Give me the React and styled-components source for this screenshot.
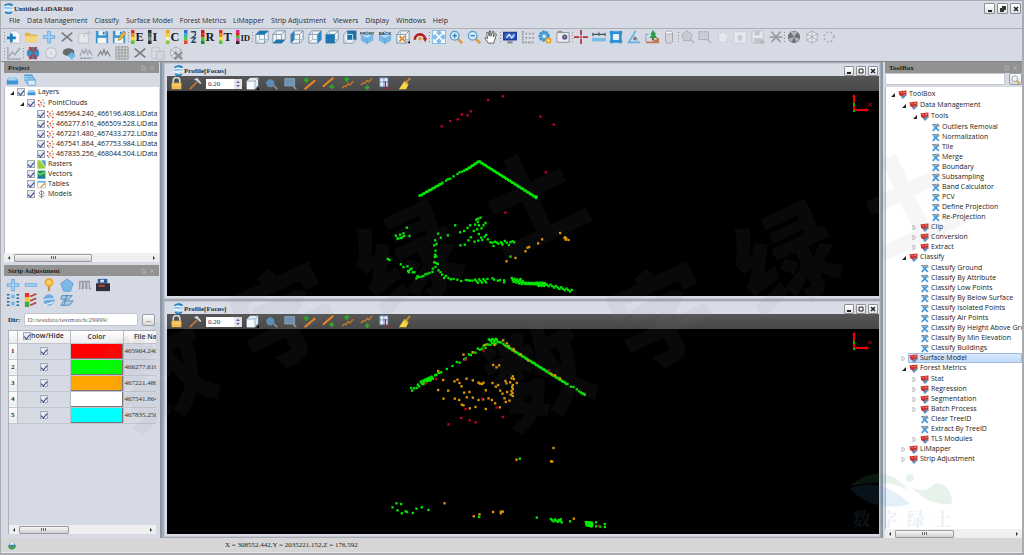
import { useState } from "react";
import styled, { createGlobalStyle } from "styled-components";

const GlobalStyle=createGlobalStyle`
    *{
        box-sizing:border-box;
    }
    body{
        margin:0;
        background:#d6dae5;
        color:#2b2d33;
        font-family:"Open Sans","Noto Sans",sans-serif;
        font-size:7px;
        line-height:10px;
    }
    button,input{
        font:inherit;
        color:inherit;
        margin:0;
        padding:0;
    }
    ul{
        list-style:none;
        margin:0;
        padding:0;
    }
`;

const mono=`font-family:"Liberation Serif","DejaVu Serif",serif;`;

const Window=styled.div`
    position:relative;
    min-height:100vh;
    display:flex;
    flex-direction:column;
    overflow:hidden;
    border:solid #a9abb1;
    border-width:1px 2px 2px 1px;
`;

const TitleBar=styled.header`
    display:flex;
    align-items:center;
    justify-content:space-between;
    height:14px;
    padding:1px 1px 0 2px;
`;

const AppTitle=styled.h1`
    ${mono}
    display:flex;
    align-items:center;
    margin:0;
    font-size:7px;
    font-weight:bold;
`;

const WindowButtons=styled.div`
    display:flex;
    gap:2px;
`;

const WindowButton=styled.button`
    display:flex;
    align-items:center;
    justify-content:center;
    width:${p=>p.$small?"10px":"11px"};
    height:${p=>p.$small?"10px":"11px"};
    border:1px solid #8d8f94;
    border-radius:1px;
    background:linear-gradient(#fff,#dfe0e3);
`;

const MenuBar=styled.nav`
    display:flex;
    gap:7px;
    height:14px;
    padding:1px 8px 0;
    border-bottom:1px solid #adb0b8;
`;

const MenuLink=styled.a`
    color:#2b2d33;
    font-weight:500;
    text-decoration:none;
    white-space:nowrap;
`;

const ToolRow=styled.div`
    display:flex;
    align-items:center;
    width:${p=>p.$short?"18%":"82%"};
    height:16px;
    padding-left:3px;
`;

const Grip=styled.span`
    flex:none;
    width:1px;
    height:10px;
    background:repeating-linear-gradient(#8c9099 0 1px,transparent 1px 3px);
`;

const ToolButton=styled.button`
    display:flex;
    align-items:center;
    justify-content:center;
    flex:${p=>p.$width?"none":"1 1 0"};
    width:${p=>p.$width?p.$width+"px":"auto"};
    min-width:0;
    height:14px;
    border:0;
    background:none;
    opacity:${p=>p.$dim?0.4:1};
`;

const Body=styled.main`
    display:flex;
    flex:1;
    min-height:0;
    border-top:1px solid #85878d;
`;

const Dock=styled.aside`
    display:flex;
    flex-direction:column;
    flex:none;
    gap:3px;
    width:${p=>p.$wide?"161px":"141px"};
    padding:${p=>p.$wide?"0 1px 0 3px":"0 0 0 2px"};
    border:solid #8797aa;
    border-width:${p=>p.$wide?"0 2px 0 0":"0 0 0 2px"};
`;

const Panel=styled.section`
    display:flex;
    flex-direction:column;
    flex:${p=>p.$grow||1} 1 0;
    min-height:0;
    overflow:hidden;
`;

const PanelHeader=styled.h2`
    ${mono}
    display:flex;
    align-items:center;
    justify-content:space-between;
    flex:none;
    height:11px;
    margin:0;
    padding:0 4px;
    background:#929292;
    color:#1f1f1f;
    font-size:7px;
    font-weight:bold;
`;

const PanelTools=styled.div`
    display:flex;
    flex:none;
`;

const StripTools=styled.div`
    display:flex;
    flex-direction:column;
    gap:1px;
    padding:2px 0 1px;
`;

const TreeBox=styled.div`
    flex:1;
    min-height:0;
    overflow:hidden;
    padding:${p=>p.$top}px 0 0 2px;
    border-left:1px solid #b4b7bd;
    background:#fff;
`;

const Branch=styled.ul`
    padding:1px 0 0 ${p=>p.$tight?"10px":"11px"};
`;

const TreeRow=styled.div`
    display:flex;
    align-items:center;
    height:10px;
`;

const Toggle=styled.button`
    display:flex;
    align-items:center;
    justify-content:center;
    flex:none;
    width:9px;
    height:10px;
    border:0;
    background:none;
`;

const TreeLabel=styled.label`
    display:flex;
    align-items:center;
    flex:1;
    gap:${p=>p.$tight?"1px":"2px"};
    height:10px;
    padding-left:1px;
    white-space:nowrap;
    border-radius:1px;
    color:#222;
    background:${p=>p.$selected?"linear-gradient(#dcebfd,#bdd8f8)":"none"};
    box-shadow:${p=>p.$selected?"inset 0 0 0 1px #9dbce0":"none"};
`;

const Check=styled.input`
    appearance:none;
    flex:none;
    display:inline-flex;
    align-items:center;
    justify-content:center;
    width:8px;
    height:8px;
    border:1px solid #a3a7af;
    background:#e6e9f1;
    &:checked::after{
        content:"";
        width:3px;
        height:5px;
        border:solid #2d3f8c;
        border-width:0 1px 1px 0;
        transform:rotate(40deg);
    }
`;

const ScrollTrack=styled.div`
    display:flex;
    align-items:center;
    flex:none;
    height:9px;
    background:#efefef;
`;

const ScrollArrow=styled.button`
    display:flex;
    align-items:center;
    justify-content:center;
    width:10px;
    height:9px;
    border:0;
    background:none;
`;

const ScrollLane=styled.div`
    flex:1;
`;

const ScrollThumb=styled.div`
    display:flex;
    align-items:center;
    justify-content:center;
    width:${p=>p.$size}%;
    height:8px;
    border:1px solid #9b9b9b;
    border-radius:1px;
    background:linear-gradient(#f8f8f8,#cfcfd1);
`;

const SearchRow=styled.form`
    display:flex;
    gap:4px;
    height:14px;
    padding:0 0 2px;
`;

const SearchInput=styled.input`
    flex:1;
    min-width:0;
    border:1px solid #c3c6ce;
    border-radius:1px;
    background:#fff;
`;

const SmallButton=styled.button`
    display:flex;
    align-items:center;
    justify-content:center;
    width:13px;
    height:12px;
    border:1px solid #9a9ca2;
    border-radius:2px;
    background:linear-gradient(#fff,#d8d8d8);
`;

const DirRow=styled.div`
    ${mono}
    display:flex;
    align-items:center;
    gap:4px;
    margin:5px 4px 4px;
    label{
        font-weight:bold;
        white-space:nowrap;
    }
`;

const DirInput=styled.input`
    flex:1;
    min-width:0;
    height:13px;
    padding:0 2px;
    border:1px solid #c3c6ce;
    border-radius:2px;
    background:#fff;
    color:#666;
`;

const TableWrap=styled.div`
    display:flex;
    flex-direction:column;
    flex:1;
    margin:0 3px 4px 4px;
    overflow:hidden;
    border-left:1px solid #aeb1b8;
    border-top:1px solid #aeb1b8;
`;

const TableScroll=styled.div`
    flex:1;
    overflow:hidden;
`;

const StripTable=styled.table`
    table-layout:fixed;
    width:170px;
    border-collapse:collapse;
    th,td{
        padding:0;
        border-right:1px solid #b9bcc5;
        border-bottom:1px solid #c2c5ce;
        text-align:center;
        white-space:nowrap;
        overflow:hidden;
    }
    th{
        height:12px;
        background:linear-gradient(#fff,#ececec);
        font-weight:600;
    }
    td{
        ${mono}
        height:16px;
    }
    tbody th{
        ${mono}
        height:16px;
        font-weight:bold;
    }
    td:last-child{
        padding-left:1px;
        text-align:left;
    }
`;

const HeadCheck=styled.label`
    display:inline-flex;
    align-items:center;
`;

const CheckHold=styled.span`
    display:flex;
    justify-content:center;
`;

const Swatch=styled.button`
    display:block;
    width:100%;
    height:15px;
    border:1px solid #7c7474;
    border-width:0 1px 1px 0;
    background:${p=>p.$color};
`;

const Mdi=styled.div`
    display:flex;
    flex-direction:column;
    flex:1;
    gap:2px;
    min-width:0;
    padding:1px 1px 1px 2px;
    background:#a4a8b0;
`;

const ViewWindow=styled.section`
    display:flex;
    flex-direction:column;
    flex:1 1 0;
    min-height:0;
    padding:1px 0 2px 2px;
    border:1px solid #c4c8d2;
    background:#d8dce7;
`;

const ViewHeader=styled.div`
    display:flex;
    align-items:center;
    justify-content:space-between;
    height:11px;
    padding:0 1px 0 6px;
`;

const ViewTools=styled.div`
    display:flex;
    align-items:center;
    flex:none;
    height:15px;
    background:linear-gradient(#565656,#484848);
`;

const Spin=styled.span`
    display:flex;
    align-items:center;
    width:36px;
    height:10px;
    margin:0 1px;
    background:#fff;
    input{
        ${mono}
        flex:1;
        min-width:0;
        padding-left:2px;
        border:0;
        background:none;
    }
`;

const Canvas=styled.div`
    position:relative;
    flex:1;
    min-height:0;
    overflow:hidden;
    background:#000;
    svg{
        display:block;
    }
`;

const Axis=styled.div`
    position:absolute;
    top:2px;
    right:3px;
`;

const Cloud=styled.svg`
    position:absolute;
    inset:0;
    width:100%;
    height:100%;
`;

const StatusBar=styled.footer`
    ${mono}
    display:flex;
    align-items:center;
    height:15px;
    padding-left:6px;
    background:#d6d6d6;
    border-bottom:1px solid #e6e8ee;
`;

const Coordinates=styled.output`
    margin-left:208px;
    color:#222;
`;

const Watermark=styled.div`
    position:absolute;
    left:${p=>p.$left}%;
    top:61%;
    display:flex;
    gap:34px;
    transform:rotate(-25deg);
    transform-origin:left center;
    pointer-events:none;
    color:rgba(128,128,128,0.07);
    font:900 102px/104px "Noto Sans CJK SC",sans-serif;
`;

const Brand=styled.div`
    position:absolute;
    right:68px;
    bottom:25px;
    display:flex;
    flex-direction:column;
    align-items:center;
    pointer-events:none;
    opacity:0.13;
    color:#5b8dbb;
    font:bold 18px/20px "Noto Serif CJK SC","Noto Sans CJK SC",serif;
`;

const BrandText=styled.div`
    display:flex;
    gap:9px;
`;

const page=<path d="M4 1h7l4 4v10H4z" fill="#f7f8fa" stroke="#b4b8c0" />;
const disk=<><path d="M1 1h13l1 2v12H1z" fill="#3f96cf" /><path d="M4 1h8v5H4z" fill="#e9f2f8" /><path d="M3 9h10v6H3z" fill="#f5f5f5" /><path d="M9 2h2v3H9z" fill="#2774a8" /></>;
const box=<><path d="M1 5l4-4h10v10l-4 4H1z" fill="#f3f7fa" stroke="#6e8ca3" strokeWidth="1" /><path d="M1 5h10v10M11 5l4-4" fill="none" stroke="#6e8ca3" /><path d="M5 1v10h10M5 11l-4 4" fill="none" stroke="#9db1c0" /></>;
const roundBox=(text)=><><path d="M1 5l7-4 7 4v7l-7 4-7-4z" fill="#74b7e6" /><path d="M1 5l7-3 7 3-7 4z" fill="#b7dcf5" /><path d="M8 9v7" stroke="#5b9fd0" /><text x="8" y="6" textAnchor="middle" fill="#26415a" fontFamily="Liberation Sans" fontWeight="bold" fontSize="5">{text}</text></>;
const glass=<><path d="M10 10l5 5" stroke="#dd9c45" strokeWidth="3" /><circle cx="6.5" cy="6.5" r="5" fill="#cfe9fa" stroke="#5a9ccc" strokeWidth="1.5" /></>;
const ramp=(colors)=>colors.map((c,i)=><rect key={i} x="0" y={i*16/colors.length} width="4" height={16/colors.length+0.1} fill={c} />);
const rainbow=["#e12a1b","#f08a1c","#f4e32a","#54c232"];
const letter=(text)=><text x="5" y="13" fill="#1c1c1c" fontFamily="Liberation Serif" fontWeight="bold" fontSize={text.length>1?"10":"14"}>{text}</text>;
const hexes=<><path d="M8 1l6 3.500v7L8 15l-6-3.500v-7z" fill="#fff" stroke="#666" /><path d="M2 4.500l12 7M14 4.500l-12 7M8 1v14" stroke="#666" /></>;
const dots=<>{[["#e04a3a",3,3],["#e04a3a",7,6],["#f2a13a",11,2],["#6db4e8",13,7],["#e04a3a",3,10],["#f2a13a",8,10],["#6db4e8",5,13],["#e04a3a",12,13]].map(([c,x,y])=><circle key={x+"-"+y} cx={x} cy={y} r="1.600" fill={c} />)}</>;
const wave=<path d="M1 14l3-3 2 1 3-4 2 2 4-5" fill="none" stroke="#cc7a22" strokeWidth="1.600" />;
const waveHigh=<path d="M1 10l3-3 2 1 3-4 2 2 4-5" fill="none" stroke="#cc7a22" strokeWidth="1.600" />;
const plus=(x,y)=><path d={`M${x} ${y-3}v6M${x-3} ${y}h6`} stroke="#2fa82a" strokeWidth="2.200" />;
const magnet=<path d="M11 11l4 4" stroke="#8d959c" strokeWidth="2" />;

const icons={
    logo:<><circle cx="8" cy="8" r="7" fill="#7fbfe6" /><path d="M1 6c5-4 9 2 14-1M0 9h16M2 12c4-3 8 1 12-1" stroke="#fff" strokeWidth="1.500" fill="none" /><path d="M2 4c4-4 10-3 12 0M3 13c3 3 7 3 10 0" fill="none" stroke="#1e78b4" strokeWidth="2" /></>,
    add:<>{page}<path d="M5 4v10M0 9h10" stroke="#167dbb" strokeWidth="3" /></>,
    folder:<><path d="M1 3h5l2 2h7v9H1z" fill="#e4b64e" /><path d="M1 7h14v7H1z" fill="#f4d580" /></>,
    plus:<><path d="M8 1v14M1 8h14" stroke="#6aa8de" strokeWidth="4" /><path d="M8 2v12M2 8h12" stroke="#a5d2f4" strokeWidth="2" /></>,
    minus:<><path d="M1 8h14" stroke="#6aa8de" strokeWidth="4" /><path d="M2 8h12" stroke="#a5d2f4" strokeWidth="2" /></>,
    cross:<path d="M2 3l12 10M14 3L2 13" stroke="#7b7d80" strokeWidth="2" />,
    export:<><path d="M2 4h11v11H2z" fill="#e6e7ea" stroke="#bcbec2" /><path d="M8 8c0-4 3-5 6-5M12 1l3 2-3 3" fill="none" stroke="#c2c4c8" strokeWidth="1.500" /></>,
    save:disk,
    saveAs:<>{disk}<path d="M7 12l1-3 6-7 2 2-6 7z" fill="#f3b735" stroke="#99661a" strokeWidth="0.600" /></>,
    colorE:<>{ramp(rainbow)}{letter("E")}</>,
    colorI:<>{ramp(["#2b2b2b","#4f6658","#75917d","#333"])}{letter("I")}</>,
    colorC:<>{ramp(["#ef9c23","#f4d23a","#f4efd0","#86c440"])}{letter("C")}</>,
    colorH:<>{ramp(["#2d6fd0","#35b8c6","#5dc848","#e74830"])}<path d="M8 2h5v4l-4 3h4l-4 5h5" fill="none" stroke="#2b4c68" strokeWidth="1.500" /></>,
    colorR:<>{ramp(["#c81418","#e12a1b","#54c232","#1c8b2a"])}{letter("R")}</>,
    colorT:<>{ramp(rainbow)}{letter("T")}</>,
    colorID:<>{ramp(["#e31b8b","#d7261d","#3abf3d","#dd3fb0","#27231f"])}{letter("ID")}</>,
    boxTop:<>{box}<path d="M1 5l4-4h10l-4 4z" fill="#1c75b5" /></>,
    boxBottom:<>{box}<path d="M1 15l4-4h10l-4 4z" fill="#1c75b5" /></>,
    boxLeft:<>{box}<path d="M1 5l4-4v10l-4 4z" fill="#2b86c4" /></>,
    boxRight:<>{box}<path d="M11 5l4-4v10l-4 4z" fill="#2b86c4" /></>,
    boxFront:<>{box}<path d="M1 5h10v10H1z" fill="#1d76b4" /></>,
    boxBack:<>{box}<path d="M5 1h10v10H5z" fill="#1d6fa8" /><path d="M1 5h10v10" fill="none" stroke="#dcebf5" /></>,
    front:roundBox("FRONT"),
    back:roundBox("BACK"),
    center:<>{box}<path d="M4 7l6 6M10 7l-6 6" stroke="#e38b2e" strokeWidth="1.800" /><path d="M13 15h3v-3z" fill="#111" /></>,
    rotate:<><path d="M2 11a6 6 0 0 1 12 0" fill="none" stroke="#b5201d" strokeWidth="3" /><path d="M11 9h5l-2 5z" fill="#b5201d" /><circle cx="8" cy="10" r="2" fill="#e8992a" /></>,
    fit:<><path d="M0 0h16v16H0z" fill="#85bce6" /><path d="M2 2l12 12M14 2L2 14" stroke="#fff" strokeWidth="2" /><path d="M2 6V2h4M10 2h4v4M14 10v4h-4M6 14H2v-4" fill="none" stroke="#fff" strokeWidth="1.500" /></>,
    zoomIn:<>{glass}<path d="M6.500 4v5M4 6.500h5" stroke="#3b7fb3" strokeWidth="1.500" /></>,
    zoomOut:<>{glass}<path d="M4 6.500h5" stroke="#3b7fb3" strokeWidth="1.500" /></>,
    search:<><path d="M10 10l5 5" stroke="#dd9c45" strokeWidth="3" /><circle cx="6.500" cy="6.500" r="5" fill="#f2f7fa" stroke="#8d969e" strokeWidth="1.500" /></>,
    hand:<path d="M5 15l-4-6 1-1 2 2L3 3l1.500-.5L6 7V1h1.500l.5 6L10 1.500l1.500.5-1 6 2.500-4 1.200.8L12 12l-1 3z" fill="#fff" stroke="#4d4d4d" />,
    monitor:<><path d="M0 2h16v10H0z" fill="#24429a" /><path d="M2 4h12v6H2z" fill="#3e66c6" /><path d="M4 9l3-4 3 4 3-4" fill="none" stroke="#dce8ff" strokeWidth="1.500" /><path d="M5 14h6" stroke="#8e9097" strokeWidth="3" /></>,
    grid:<path d="M2 1v14M5 4h2M9 4h2M13 4h2M5 9h2M9 9h2M13 9h2M2 14h13" stroke="#96999f" strokeWidth="2" strokeDasharray="2 1" />,
    gear:<><circle cx="7" cy="7" r="5" fill="#5fa8dc" stroke="#3c8dc8" strokeWidth="3" strokeDasharray="2.500 1" /><circle cx="7" cy="7" r="2" fill="#cfe6f6" /><circle cx="12" cy="12" r="2.500" fill="#fff0b8" stroke="#eda320" strokeWidth="2" /></>,
    camera:<><path d="M1 3h14v11H1z" fill="#ebecef" stroke="#898c92" /><path d="M2 1h5v2H2z" fill="#8b8e94" /><circle cx="10" cy="8" r="3" fill="#6a4b91" /><circle cx="10" cy="8" r="1.200" fill="#68b065" /></>,
    pick:<><path d="M8 0v6M8 10v6M0 8h6M10 8h6" stroke="#b2343a" strokeWidth="2" /><path d="M7 7h2v2H7z" fill="#b2343a" /></>,
    length:<><path d="M1 5h14M1 3v4M15 3v4" stroke="#42525e" strokeWidth="1.200" /><path d="M8 2v5" stroke="#42525e" /><path d="M0 9h16v4H0z" fill="#79bce8" /></>,
    area:<><path d="M3 3h10v10H3z" fill="#e3f1fb" stroke="#2e91d5" strokeWidth="3" /><path d="M1 1h4v4H1zM11 1h4v4h-4zM1 11h4v4H1zM11 11h4v4h-4z" fill="#2e91d5" /></>,
    angle:<><path d="M10 1L2 14h13" fill="none" stroke="#68b1e2" strokeWidth="2" /><path d="M8 7c3 1 4 3 4 6" fill="none" stroke="#68b1e2" /><circle cx="9" cy="10" r="2" fill="#8e6f63" /></>,
    tree:<><path d="M1 15h15V9h-3v2h-3v2H1z" fill="#c0774f" /><path d="M9 0l4 5h-2l3 4H5l3-4H6z" fill="#2b9c45" /><path d="M8 9h2v3H8z" fill="#6c4423" /><path d="M1 13V5h3" fill="none" stroke="#58a5d8" /></>,
    cylinder:<><path d="M4 3v10c0 3 8 3 8 0V3z" fill="#d4d5d8" stroke="#a2a4a9" /><ellipse cx="8" cy="3" rx="4" ry="2" fill="#f3f3f4" stroke="#a2a4a9" /></>,
    polySelect:<><path d="M7 1l6 4-2 7H3L1 5z" fill="#b4b6ba" stroke="#3d3f43" strokeDasharray="2 1" />{magnet}</>,
    rectSelect:<><path d="M1 2h11v9H1z" fill="#b9bbc0" stroke="#37393d" strokeDasharray="2 1" />{magnet}</>,
    polyLight:<path d="M8 2l6 4-2 8H4L2 6z" fill="#fff" stroke="#bbb" />,
    polyOut:<><path d="M1 2h14v13H1z" fill="#fff" stroke="#bbb" /><path d="M5 6h6l-1 6H6z" fill="#aeb1b7" /></>,
    saveLight:<><path d="M1 1h11l2 2v12H1z" fill="#fff" stroke="#999" /><path d="M4 1h6v5H4zM3 9h8v6H3z" fill="#aaa" /><path d="M12 9l4 6h-6z" fill="#777" /></>,
    scissors:<path d="M3 2l10 12M13 2L3 14M1 8h14" stroke="#444" strokeWidth="2" />,
    ball:<><circle cx="8" cy="8" r="7" fill="#707377" /><path d="M8 8L4 2h8zM8 8l-6 2 3 4zM8 8l6 2-3 4z" fill="#b3b6ba" /></>,
    hexes,
    ring:<circle cx="8" cy="8" r="5.500" fill="none" stroke="#555" strokeWidth="2" strokeDasharray="1.500 3" />,
    chart:<><path d="M1 1v14h15" fill="none" stroke="#4c4f55" strokeWidth="1.500" /><path d="M2 12l4-5 3 3 6-8" fill="none" stroke="#4c4f55" strokeWidth="1.500" /></>,
    compass:<><circle cx="8" cy="8" r="7" fill="#5d7b99" /><path d="M8 8L3 1h3zM8 8l5-7h-3zM8 8l-5 7h3zM8 8l5 7h-3z" fill="#c62a2c" /><path d="M1 6l7 2-7 3zM15 6L8 8l7 3z" fill="#2e94d4" /></>,
    circle:<><circle cx="8" cy="8" r="6" fill="#fff" stroke="#a4a4a4" strokeWidth="1.500" /><circle cx="8" cy="8" r="2.500" fill="#ddd" /></>,
    lasso:<><path d="M1 6c2-5 12-4 13 0 1 4-4 6-8 5-3 0-6-2-5-5z" fill="#66696d" /><path d="M11 7v8M7 11h8" stroke="#6eb3e3" strokeWidth="3" /></>,
    peaks:<path d="M1 11l3-6 2 4 2-5 2 5 2-4 3 6M1 14h14" fill="none" stroke="#3e4044" strokeWidth="1.500" strokeDasharray="3 1" />,
    peaks2:<path d="M1 12l3-6 2 4 2-6 2 6 2-4 3 6" fill="none" stroke="#7e8084" strokeWidth="1.300" />,
    mesh:<path d="M1 1h14v14H1zM1 4.500h14M1 8h14M1 11.500h14M4.500 1v14M8 1v14M11.500 1v14" fill="#d4d5d8" stroke="#96989c" />,
    discs:<><path d="M1 2h9v12H1z" fill="#e7e7e7" stroke="#999" /><path d="M6 6h9v9H6z" fill="#d4d4d4" stroke="#888" /><path d="M2 6h7" stroke="#aaa" /></>,
    hexCross:<>{hexes}<path d="M6 7l9 8M15 7l-9 8" stroke="#222" strokeWidth="2.500" /></>,
    layer:<><path d="M1 13V9c0-7 14-7 14 0v4z" fill="#4292d6" /><path d="M2 8c1-6 11-6 12 0z" fill="#a9d2f2" /></>,
    stack:<><path d="M1 1h10v8H1z" fill="#d9ecf9" stroke="#4e9fd2" /><path d="M3 4h10v8H3z" fill="#d9ecf9" stroke="#4e9fd2" /><path d="M5 7h10v8H5z" fill="#d9ecf9" stroke="#4e9fd2" /><path d="M1 2h10M3 5h10M5 8h10" stroke="#4e9fd2" strokeWidth="1.500" /></>,
    dots,
    raster:<><path d="M1 1h14v14H1z" fill="#8fc63d" /><path d="M1 1h5l5 14H1z" fill="#9ccb42" /><path d="M5 1h3l7 11v3z" fill="#f4e9a0" /><path d="M8 1h7v11z" fill="#39a6d8" /></>,
    vector:<><path d="M1 1h14v14H1z" fill="#1f9a4c" /><path d="M2 5l4 4 4-4h4" fill="none" stroke="#8fd9a6" strokeWidth="2" /><path d="M1 13l6-4 8 5v1H1z" fill="#2277b4" /></>,
    table:<><path d="M1 2h14v12H1z" fill="#fff" stroke="#7a9fc1" /><path d="M1 2h14v3H1z" fill="#73b4e4" /><path d="M5 13l8-8 2 2-8 7z" fill="#e79a3e" /></>,
    model:<path d="M8 1v14M3 9c0 4 10 4 10 0M8 1l5 4-5 4-5-4z" fill="none" stroke="#6a6a6a" strokeWidth="1.300" />,
    toolbox:<><path d="M1 2l14-1v9l-7 3-6-4z" fill="#cf2f2b" /><path d="M4 3l3 3M9 4h4" stroke="#f3aca3" strokeWidth="1.500" /><path d="M6 12l6-5 3 2-5 6H7z" fill="#5d8fbd" /></>,
    tool:<><path d="M5 5l9 9" stroke="#3f9be0" strokeWidth="3" /><path d="M12 5L3 14" stroke="#3f9be0" strokeWidth="3" /><path d="M2 3h6l3 3M10 2c3 0 4 1 4 4" fill="none" stroke="#7f8f9a" strokeWidth="2.500" /></>,
    pin:<><path d="M8 8v7" stroke="#b9924a" strokeWidth="2.500" /><circle cx="8" cy="5" r="4" fill="#f9cd65" stroke="#eba62f" strokeWidth="2" /></>,
    pentagon:<path d="M8 1l7 5-3 9H4L1 6z" fill="#7db8e3" stroke="#5a9fd4" />,
    signal:<path d="M1 12h1V4h3v8h1V4h3v8h1V4h3v8h2" fill="none" stroke="#999ca4" strokeWidth="1.500" />,
    device:<><path d="M2 1h11v5H2z" fill="#2c5b9c" /><path d="M0 6h16v9H0z" fill="#2c2e3b" /><path d="M3 9h7" stroke="#d03f37" strokeWidth="2" /><path d="M5 2h4v3H5z" fill="#e3e8ef" /></>,
    pairs:<><path d="M6 2h4v4H6zM6 10h4v4H6z" fill="#6fb4e4" /><path d="M1 2h3M1 6h3M12 2h3M12 6h3M1 10h3M1 14h3M12 10h3M12 14h3" stroke="#2d6b98" strokeWidth="1.500" /></>,
    legend:<><path d="M1 0h5v5H1z" fill="#e53024" /><path d="M1 5h5v5H1z" fill="#f0cb2d" /><path d="M1 10h5v6H1z" fill="#39ad45" /><path d="M7 4l7-3M7 9l7-3M7 14l7-3" stroke="#b54b48" strokeWidth="2" /></>,
    sync:<><circle cx="8" cy="8" r="6.500" fill="#6daddc" /><path d="M1 9c4-5 9 1 14-4M4 14c3-4 6 0 9-4" fill="none" stroke="#d9eefb" strokeWidth="1.500" /></>,
    planes:<path d="M2 3h12l-4 4H1zM4 9h11l-4 5H1zM8 2L4 15" fill="#a8cbe8" stroke="#4d86b5" />,
    lock:<><path d="M4 7V4a4 3.500 0 0 1 8 0v3" fill="none" stroke="#d9dde0" strokeWidth="2" /><path d="M2 7h12v8H2z" fill="#f1bb4d" /><path d="M2 10h12" stroke="#f9dc92" /></>,
    hammer:<><path d="M1 15l9-9" stroke="#c4763a" strokeWidth="2" /><path d="M6 3l4-2 5 6-1 2-4-4z" fill="#d4d7da" /></>,
    cube:<><path d="M1 5l4-4h10v9l-4 5H1z" fill="#dcecf6" /><path d="M1 5h10v10H1z" fill="#f8fbfd" /><path d="M1 5h10v10M11 5l4-4" fill="none" stroke="#8aa5b8" /><path d="M13 16h3v-3z" fill="#000" /></>,
    polyTool:<><path d="M6 2l5 3 1 5-4 3-5-1-2-6z" fill="#5b8db5" />{magnet}</>,
    rectTool:<><path d="M1 2h12v9H1z" fill="#6e92b3" stroke="#8facc4" />{magnet}</>,
    lineAbove:<><path d="M2 15L15 4" stroke="#f0851e" strokeWidth="2.500" />{plus(4,4)}</>,
    lineBelow:<><path d="M1 12L14 1" stroke="#f0851e" strokeWidth="2.500" />{plus(12,12)}</>,
    waveAbove:<>{wave}{plus(7,3)}</>,
    waveBelow:<>{waveHigh}{plus(9,13)}</>,
    axisSave:<><path d="M1 1h10v11H1z" fill="#e9f0fa" stroke="#5a84c4" /><path d="M1 6h10M6 1v11" stroke="#5a84c4" /><path d="M8 5v9h8" fill="none" stroke="#a32c2c" strokeWidth="1.600" /></>,
    broom:<><path d="M15 1l-5 6" stroke="#c5832e" strokeWidth="2.500" /><path d="M8 5l5 4-3 6H1z" fill="#f7d844" /><path d="M7 6l5 4" stroke="#b69b1d" /></>,
    ready:<><path d="M8 1l6 8c0 8-12 8-12 0z" fill="#3b83b9" /><path d="M8 1l4 6-8 1z" fill="#f2f2f2" /><path d="M2 10c4 2 8 1 12-2 1 8-11 10-12 2z" fill="#4aa748" /></>,
};

const iconLabels={plus:"Add",minus:"Remove",cross:"Delete"};

function Icon({name,size=14}){
    return <svg width={size} height={size} viewBox="0 0 16 16" aria-hidden="true">{icons[name]}</svg>;
}

const mainTools=[
    ["add","folder","plus","cross","export","save","saveAs"],
    ["colorE","colorI","colorC","colorH","colorR","colorT","colorID"],
    ["boxTop","boxBottom","boxLeft","boxRight","boxFront","boxBack","front","back","center","rotate"],
    ["fit","zoomIn","zoomOut","hand"],
    ["monitor","grid","gear","camera"],
    ["pick","length","area","angle","tree","cylinder"],
    ["polySelect","rectSelect","polyLight","polyOut","saveLight","scissors"],
    ["ball","hexes","ring"],
];
const extraTools=[["chart"],["compass","circle","lasso","peaks","peaks2","mesh","cross","discs","hexCross"]];
const dimTools=["polySelect","rectSelect","polyLight","polyOut","saveLight","scissors","hexes","ring","circle","chart","discs","hexCross","peaks"];
const profileTools=["cube","polyTool","rectTool","lineAbove","lineBelow","waveAbove","waveBelow","axisSave","broom"];
const stripTools=[
    ["plus","minus","pin","pentagon","signal","device"],
    ["pairs","legend","sync","planes"],
];
const menus=["File","Data Management","Classify","Surface Model","Forest Metrics","LiMapper","Strip Adjustment","Viewers","Display","Windows","Help"];

const leaf=(icon)=>(name)=>({name,icon});

const layers={name:"Layers",icon:"layer",children:[
    {name:"PointClouds",icon:"dots",children:[
        "465964.240_466196.408.LiData",
        "466277.616_466509.528.LiData",
        "467221.480_467433.272.LiData",
        "467541.864_467753.984.LiData",
        "467835.256_468044.504.LiData",
    ].map(name=>({name,icon:"dots",tight:true}))},
    {name:"Rasters",icon:"raster"},
    {name:"Vectors",icon:"vector"},
    {name:"Tables",icon:"table"},
    {name:"Models",icon:"model"},
]};

const folder=(name,children)=>({name,icon:"toolbox",folder:true,children});

const toolbox=folder("ToolBox",[
    folder("Data Management",[
        folder("Tools",["Outliers Removal","Normalization","Tile","Merge","Boundary","Subsampling","Band Calculator","PCV","Define Projection","Re-Projection"].map(leaf("tool"))),
        folder("Clip"),
        folder("Conversion"),
        folder("Extract"),
    ]),
    folder("Classify",["Classify Ground","Classify By Attribute","Classify Low Points","Classify By Below Surface","Classify Isolated Points","Classify Air Points","Classify By Height Above Ground","Classify By Min Elevation","Classify Buildings"].map(leaf("tool"))),
    {...folder("Surface Model"),selected:true},
    folder("Forest Metrics",[
        folder("Stat"),
        folder("Regression"),
        folder("Segmentation"),
        folder("Batch Process"),
        ...["Clear TreeID","Extract By TreeID"].map(leaf("tool")),
        folder("TLS Modules"),
    ]),
    folder("LiMapper"),
    folder("Strip Adjustment"),
]);

const strips=[
    ["#ff0000","465964.240"],
    ["#00ff00","466277.616"],
    ["#ffa500","467221.480"],
    ["#ffffff","467541.864"],
    ["#00ffff","467835.256"],
];

const points=(text)=>text.trim().split(/\s+/).map(p=>p.split(",").map(Number));

// evenly spaced returns between two ends
const run=(x1,y1,x2,y2,count,spread=2)=>Array.from({length:count},(_,i)=>{
    const t=i/(count-1);
    return [x1+(x2-x1)*t,y1+(y2-y1)*t+((i*7)%3-1)*spread];
});

const firstCloud={
    top:-1,
    green:[
        ...run(118,316,187,277,22,1),
        ...run(257,238,295,213,14,1),
        ...run(298,213,467,320,56,1),
        ...run(395,567,430,577,14,5),
        ...run(430,578,495,580,24,2),
        ...run(470,581,492,581,9,5),
        ...run(495,581,575,601,16,3),
        ...run(285,572,322,570,10,5),
        ...points("468,322 470,318 465,318 198,270 203,266 210,264 220,257 232,250 238,245 245,243 252,240"),
        ...points("225,404 203,434 182,441 174,429 80,411 47,435 60,432 70,428 72,436 55,443 63,442 66,440 88,436 52,444"),
        ...points("241,464 254,462 265,449 272,440 240,425 252,421 262,412 270,404 288,387 294,384 301,381 293,394 285,402 296,404 304,413 310,404 316,397 291,416 281,421 296,430 303,441 313,438 318,433 306,448 294,450 283,453 323,446 331,455 337,456 345,453 350,456 340,466 355,459 362,455 367,462 374,451 380,456 386,463 391,455 397,452 402,455 365,457"),
        ...points("165,449 162,464 169,460 166,480 165,492 168,497 164,499 162,515 168,517 173,520 166,529 158,534 157,544 148,547 142,549 136,551 130,556 124,558 117,559 112,557 109,563 98,545 103,545 94,534 90,537 84,541 86,545 82,527 70,529 62,521 23,505 28,508"),
        ...points("175,539 181,545 186,552 192,562 197,556 205,562 212,566 220,565 232,567 243,571 257,568 264,569 270,570 277,570 337,563 342,567 353,570 360,568 372,575 372,569 391,498 421,565"),
    ],
    red:points("185,107 210,91 233,86 245,71 262,74 272,62 324,28 368,17 481,78 521,102 497,245 376,366"),
    orange:points("540,427 555,440 558,443 553,442 557,447 565,448 486,446 474,458 447,469 442,471 436,482 406,502 379,512"),
};

const secondCloud={
    top:-4,
    green:[
        ...run(122,172,158,155,18,4),
        ...run(370,56,562,176,58,1),
        ...run(320,58,363,48,9,2),
        ...run(326,44,350,42,8,3),
        ...run(617,594,637,597,14,5),
        ...run(512,583,545,587,9,3),
        ...points("93,187 96,195 102,188 110,187 113,177 117,182 130,176 136,171 140,166 150,165 165,149 169,147 176,142 183,140 200,130 217,121 230,109 238,111 252,101 257,98 266,86 272,88 279,80 286,81 293,69 300,72 306,69 310,60 316,67"),
        ...points("572,183 580,184 590,191 597,197 603,201 607,203 610,205 614,207"),
        ...points("49,533 63,535 37,545 52,554 65,563 76,557 80,559 98,562 109,549 125,545 145,553 297,574 419,399 470,576 542,581 570,587 630,590 634,602 648,590 648,602 660,603 674,595 674,604"),
    ],
    orange:points("174,136 189,163 174,193 204,195 190,219 223,167 232,162 238,172 244,182 259,159 278,164 295,171 300,174 306,175 310,171 337,172 347,183 354,178 360,195 367,204 381,199 376,166 379,173 390,170 394,158 398,152 401,160 410,172 398,178 396,184 398,190 394,196 397,202 392,207 398,211 373,218 377,229 388,225 359,245 345,233 335,223 325,218 309,221 295,223 278,216 260,215 268,199 252,201 237,223 224,219 245,237 250,239 269,248 286,244 317,250 317,194 339,118 357,119 349,125 369,44 380,53 386,61 400,70 403,76 422,86 443,104 514,146 525,149 539,158 250,87 277,80 315,58 343,58 520,367 513,407 516,408 409,402 193,533 281,572 298,566 339,559 362,558 368,558 362,563 581,579"),
    red:points("205,296 243,277 268,284 286,290 368,274 349,246 306,219 256,250 137,173 167,160 257,102 310,75 506,134 656,600"),
};

function Points({data,color}){
    return <g fill={color}>{data.map(([x,y],i)=><rect key={i} x={x-3} y={y-3} width="7" height="7" />)}</g>;
}

function TreeNode({node,checks}){
    const [open,setOpen]=useState(true);
    const hasToggle=node.children||node.folder;
    const expanded=node.children&&open;
    return <li>
        <TreeRow>
            {hasToggle?<Toggle type="button" aria-label={"Toggle "+node.name} onClick={()=>setOpen(!open)}>
                <svg width="5" height="5" viewBox="0 0 5 5">
                    {expanded?<path d="M5 1v4H1z" fill="#222" />:<path d="M1 0l3 2.500L1 5z" fill="#fff" stroke="#aaa" strokeWidth="0.800" />}
                </svg>
            </Toggle>:<Toggle as="span" />}
            <TreeLabel $selected={node.selected} $tight={node.tight}>
                {checks&&<Check type="checkbox" defaultChecked />}
                <Icon name={node.icon} size={9} />
                {node.name}
            </TreeLabel>
        </TreeRow>
        {expanded&&<Branch $tight={checks}>{node.children.map(child=><TreeNode key={child.name} node={child} checks={checks} />)}</Branch>}
    </li>;
}

function ScrollBar({size}){
    return <ScrollTrack>
        <ScrollArrow type="button" aria-label="Scroll left"><svg width="4" height="4"><path d="M3 0v4L1 2z" fill="#333" /></svg></ScrollArrow>
        <ScrollLane>
            <ScrollThumb $size={size}><svg width="5" height="3"><path d="M0 0h1v3H0zM2 0h1v3H2zM4 0h1v3H4z" fill="#666" /></svg></ScrollThumb>
        </ScrollLane>
        <ScrollArrow type="button" aria-label="Scroll right"><svg width="4" height="4"><path d="M1 0v4l2-2z" fill="#333" /></svg></ScrollArrow>
    </ScrollTrack>;
}

function Controls({small,restore}){
    return <WindowButtons>
        <WindowButton $small={small} type="button" aria-label="Minimize"><svg width="6" height="6"><path d="M1 4h4v2H1z" fill="#222" /></svg></WindowButton>
        <WindowButton $small={small} type="button" aria-label="Maximize"><svg width="6" height="6">{restore?<path d="M2 0h4v4H4v2H0V2h2z" fill="#333" />:<path d="M1 1h4v4H1z" fill="none" stroke="#222" />}</svg></WindowButton>
        <WindowButton $small={small} type="button" aria-label="Close"><svg width="6" height="6"><path d="M1 1l4 4M5 1L1 5" stroke="#222" strokeWidth="1.500" /></svg></WindowButton>
    </WindowButtons>;
}

function Header({title}){
    return <PanelHeader>
        {title}
        <svg width="14" height="6" aria-hidden="true"><path d="M3 1H1v4h4V3M3 3l2-2M9 1l4 4M13 1L9 5" fill="none" stroke="#b0b0b0" /></svg>
    </PanelHeader>;
}

function ToolGroups({groups,short}){
    return <ToolRow $short={short}>
        {groups.map((group,i)=>[
            <Grip key={"grip"+i} />,
            ...group.map(name=><ToolButton key={name} type="button" aria-label={iconLabels[name]||name} $dim={dimTools.includes(name)}><Icon name={name} /></ToolButton>),
        ])}
    </ToolRow>;
}

function ProfileView({cloud}){
    return <ViewWindow>
        <ViewHeader>
            <AppTitle as="h3"><Icon name="logo" size={11} />Profile[Focus]</AppTitle>
            <Controls small />
        </ViewHeader>
        <ViewTools>
            <ToolButton $width={19} type="button" aria-label="Lock"><Icon name="lock" size={13} /></ToolButton>
            <ToolButton $width={19} type="button" aria-label="Settings"><Icon name="hammer" size={13} /></ToolButton>
            <Spin>
                <input type="text" aria-label="Buffer width" defaultValue="0.20" />
                <svg width="8" height="10"><path d="M0 0h8v10H0z" fill="#e4e4ec" /><path d="M2 4l2-2 2 2zM2 6l2 2 2-2z" fill="#59609a" /></svg>
            </Spin>
            {profileTools.map(name=><ToolButton key={name} $width={19} type="button" aria-label={name}><Icon name={name} size={13} /></ToolButton>)}
        </ViewTools>
        <Canvas>
            <Cloud viewBox="0 0 712 204" aria-label="Point cloud profile">
                <g transform={`translate(213 ${cloud.top}) scale(0.3333)`}>
                    <Points data={cloud.green} color="#00e800" />
                    <Points data={cloud.orange} color="#dc9600" />
                    <Points data={cloud.red} color="#c8002c" />
                </g>
            </Cloud>
            <Axis>
                <svg width="28" height="20">
                    <path d="M6 2v15h14" fill="none" stroke="#f00000" strokeWidth="2" />
                    <path d="M4 4l2-3 2 3zM18 15l3 2-3 2z" fill="#f00000" />
                    <path d="M6 10v3M5 18h2" stroke="#00c000" strokeWidth="2" />
                    <path d="M20 10l4 3M24 10l-4 3" stroke="#a80000" />
                </svg>
            </Axis>
        </Canvas>
    </ViewWindow>;
}

function StripPanel(){
    return <Panel $grow={15}>
        <Header title="Strip Adjustment" />
        <StripTools>
            {stripTools.map((row,i)=><PanelTools key={i}>
                {row.map(name=><ToolButton key={name} $width={18} type="button" aria-label={iconLabels[name]||name}><Icon name={name} /></ToolButton>)}
            </PanelTools>)}
        </StripTools>
        <DirRow>
            <label htmlFor="dir">Dir:</label>
            <DirInput id="dir" type="text" defaultValue="D:/testdata/testmatch/29999/" />
            <SmallButton type="button">...</SmallButton>
        </DirRow>
        <TableWrap>
            <TableScroll>
                <StripTable>
                    <colgroup>
                        <col style={{width:8}} /><col style={{width:53}} /><col style={{width:53}} /><col />
                    </colgroup>
                    <thead>
                        <tr>
                            <th aria-label="Row" />
                            <th scope="col"><HeadCheck><Check type="checkbox" defaultChecked />how/Hide</HeadCheck></th>
                            <th scope="col">Color</th>
                            <th scope="col">File Name</th>
                        </tr>
                    </thead>
                    <tbody>
                        {strips.map(([color,file],i)=><tr key={file}>
                            <th scope="row">{i+1}</th>
                            <td><CheckHold><Check type="checkbox" defaultChecked aria-label={"Show "+file} /></CheckHold></td>
                            <td><Swatch type="button" $color={color} aria-label={"Color of "+file} /></td>
                            <td>{file}</td>
                        </tr>)}
                    </tbody>
                </StripTable>
            </TableScroll>
            <ScrollBar size={39} />
        </TableWrap>
    </Panel>;
}

function WatermarkText(){
    return ["数","字","绿","土"].map(c=><span key={c}>{c}</span>);
}

function App(){
    return <Window>
        <GlobalStyle />
        <TitleBar>
            <AppTitle><Icon name="logo" size={11} />Untitled-LiDAR360</AppTitle>
            <Controls restore />
        </TitleBar>
        <MenuBar>{menus.map(menu=><MenuLink key={menu} href="#">{menu}</MenuLink>)}</MenuBar>
        <ToolGroups groups={mainTools} />
        <ToolGroups groups={extraTools} short />
        <Body>
            <Dock $wide>
                <Panel $grow={11}>
                    <Header title="Project" />
                    <PanelTools>
                        <ToolButton $width={17} type="button" aria-label="Layer"><Icon name="layer" size={13} /></ToolButton>
                        <ToolButton $width={17} type="button" aria-label="Windows"><Icon name="stack" size={12} /></ToolButton>
                    </PanelTools>
                    <TreeBox $top={0}><ul><TreeNode node={layers} checks /></ul></TreeBox>
                    <ScrollBar size={58} />
                </Panel>
                <StripPanel />
            </Dock>
            <Mdi>
                <ProfileView cloud={firstCloud} />
                <ProfileView cloud={secondCloud} />
            </Mdi>
            <Dock>
                <Panel>
                    <Header title="ToolBox" />
                    <SearchRow>
                        <SearchInput type="search" aria-label="Search tools" />
                        <SmallButton type="button" aria-label="Search"><Icon name="search" size={9} /></SmallButton>
                    </SearchRow>
                    <TreeBox $top={2}><ul><TreeNode node={toolbox} /></ul></TreeBox>
                    <ScrollBar size={50} />
                </Panel>
            </Dock>
        </Body>
        <StatusBar>
            <Icon name="ready" size={10} />
            <Coordinates>X = 308552.442,Y = 2035221.152,Z = 176.592</Coordinates>
        </StatusBar>
        <Watermark $left={11}><WatermarkText /></Watermark>
        <Watermark $left={48}><WatermarkText /></Watermark>
        <Brand>
            <svg width="104" height="36" viewBox="0 0 104 36">
                <path d="M0 14C20-4 44-2 58 18 40 8 20 10 0 14z" fill="#4fa46a" />
                <path d="M0 16c22-8 44 0 60 16C38 38 14 34 0 16z" fill="#3b8fd0" />
                <path d="M54 12c14 4 18 22 48 20 0-14-6-22-18-20-8 10-18 6-30 0z" fill="#4fa46a" />
                <circle cx="60" cy="6" r="4" fill="#4fa46a" />
            </svg>
            <BrandText><WatermarkText /></BrandText>
        </Brand>
    </Window>;
}

export default App;
